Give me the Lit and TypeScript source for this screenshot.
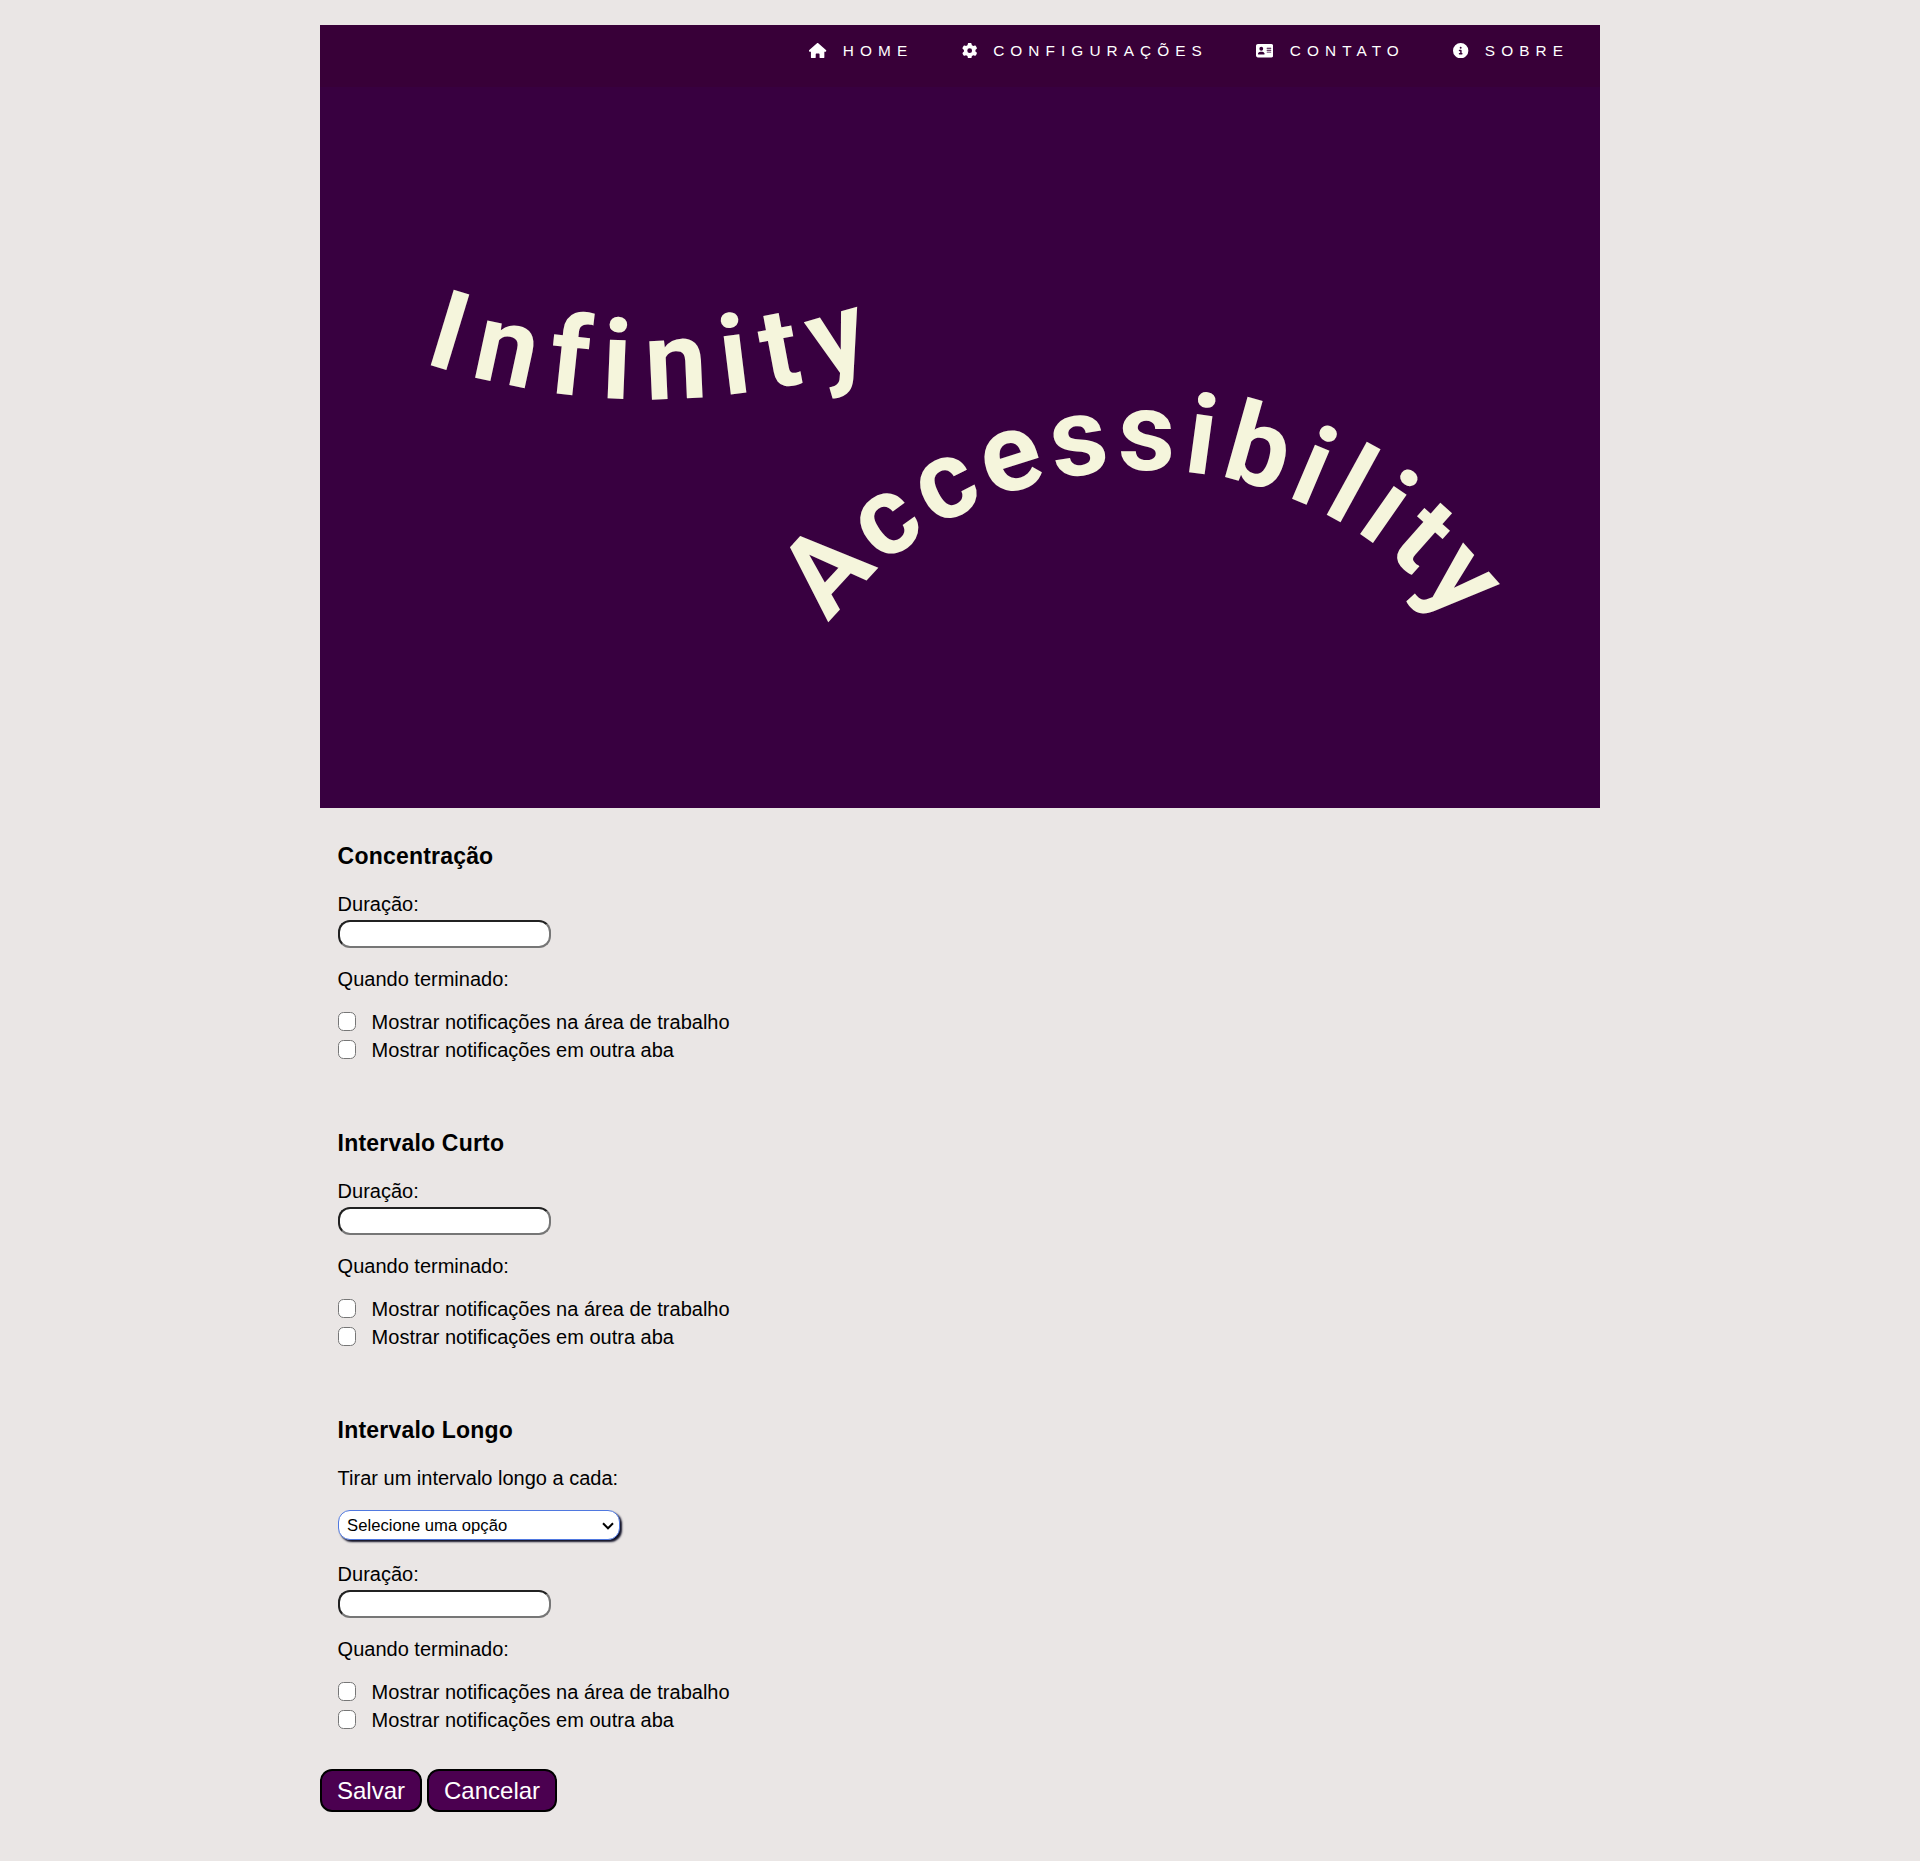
import { LitElement, html, css, svg } from "lit";
import { customElement, property } from "lit/decorators.js";

type Glyph = [char: string, x: number, y: number, angle: number];

const INFINITY: Glyph[] = [
  ["I", 423, 362.9, 16.9],
  ["n", 469.5, 376.6, 12.1],
  ["f", 546.4, 392.6, 6],
  ["i", 600.7, 397.9, 2.3],
  ["n", 646.2, 400, -2.6],
  ["i", 724.1, 395.3, -7],
  ["t", 767.7, 389.5, -10.6],
  ["y", 820.1, 378.4, -16.2],
];

const ACCESSIBILITY: Glyph[] = [
  ["A", 828.1, 622.6, -47.4],
  ["c", 882.1, 564.9, -36],
  ["c", 934.7, 527.4, -27],
  ["e", 991.6, 498.2, -17.5],
  ["s", 1055.3, 479, -8.8],
  ["s", 1118, 470.1, 0],
  ["i", 1182.3, 471.3, 7.7],
  ["b", 1219.3, 475.3, 15.7],
  ["i", 1285.7, 496, 23],
  ["l", 1320.7, 511.4, 28.7],
  ["i", 1354.4, 530.1, 35],
  ["t", 1384.9, 551.6, 41.5],
  ["y", 1419.1, 581.2, 48.5],
];

const curvedWord = (glyphs: Glyph[]) => svg`<text
  x=${glyphs.map((g) => g[1]).join(" ")}
  y=${glyphs.map((g) => g[2]).join(" ")}
  rotate=${glyphs.map((g) => g[3]).join(" ")}
>${glyphs.map((g) => g[0]).join("")}</text>`;

const ICONS = {
  home: {
    width: 576,
    d: "M575.8 255.5c0 18-15 32.1-32 32.1h-32l.7 160.2c0 2.7-.2 5.4-.5 8.1V472c0 22.1-17.9 40-40 40H456c-1.1 0-2.200 0-3.300-.1c-1.400 .1-2.800 .1-4.200 .1H416 392c-22.100 0-40-17.900-40-40V448 384c0-17.700-14.300-32-32-32H256c-17.700 0-32 14.300-32 32v64 24c0 22.100-17.900 40-40 40H160 128.100c-1.500 0-3-.1-4.500-.2c-1.200 .1-2.400 .2-3.600 .2H104c-22.100 0-40-17.900-40-40V360c0-.9 0-1.900 .1-2.800V287.600H32c-18 0-32-14-32-32.100c0-9 3-17 10-24L266.400 8c7-7 15-8 22-8s15 2 21 7L564.800 231.500c8 7 12 15 11 24z",
  },
  gear: {
    width: 512,
    d: "M495.900 166.600c3.200 8.700 .5 18.400-6.400 24.600l-43.300 39.400c1.100 8.300 1.700 16.800 1.700 25.400s-.6 17.100-1.700 25.400l43.300 39.400c6.900 6.200 9.600 15.900 6.400 24.600c-4.400 11.900-9.700 23.300-15.800 34.300l-4.700 8.100c-6.600 11-14 21.400-22.100 31.200c-5.900 7.200-15.700 9.600-24.500 6.800l-55.700-17.700c-13.400 10.300-28.200 18.900-44 25.400l-12.500 57.100c-2 9.100-9 16.300-18.200 17.800c-13.800 2.300-28 3.500-42.500 3.500s-28.700-1.200-42.500-3.500c-9.200-1.500-16.200-8.700-18.200-17.800l-12.500-57.100c-15.800-6.500-30.600-15.100-44-25.400L83.100 425.900c-8.800 2.800-18.600 .3-24.500-6.800c-8.100-9.800-15.500-20.200-22.100-31.200l-4.700-8.100c-6.100-11-11.400-22.400-15.800-34.300c-3.200-8.700-.5-18.400 6.400-24.600l43.300-39.400C64.600 273.100 64 264.600 64 256s.6-17.100 1.700-25.400L22.400 191.200c-6.900-6.200-9.600-15.900-6.400-24.600c4.400-11.900 9.700-23.300 15.800-34.300l4.700-8.100c6.600-11 14-21.400 22.100-31.200c5.900-7.200 15.700-9.600 24.500-6.800l55.700 17.700c13.400-10.300 28.200-18.900 44-25.400l12.500-57.100c2-9.100 9-16.300 18.200-17.800C227.300 1.200 241.500 0 256 0s28.700 1.200 42.500 3.500c9.200 1.500 16.200 8.700 18.200 17.800l12.500 57.100c15.800 6.500 30.600 15.100 44 25.400l55.700-17.700c8.800-2.800 18.600-.3 24.500 6.800c8.100 9.800 15.500 20.200 22.100 31.200l4.700 8.100c6.100 11 11.400 22.400 15.800 34.300zM256 336a80 80 0 1 0 0-160 80 80 0 1 0 0 160z",
  },
  card: {
    width: 576,
    d: "M64 32C28.700 32 0 60.700 0 96V416c0 35.300 28.700 64 64 64H512c35.300 0 64-28.700 64-64V96c0-35.300-28.700-64-64-64H64zm80 256h64c44.200 0 80 35.800 80 80c0 8.800-7.200 16-16 16H80c-8.800 0-16-7.200-16-16c0-44.200 35.800-80 80-80zm-32-96a64 64 0 1 1 128 0 64 64 0 1 1-128 0zm256-32H496c8.800 0 16 7.200 16 16s-7.200 16-16 16H368c-8.800 0-16-7.200-16-16s7.200-16 16-16zm0 64H496c8.800 0 16 7.200 16 16s-7.200 16-16 16H368c-8.800 0-16-7.200-16-16s7.200-16 16-16zm0 64H496c8.800 0 16 7.200 16 16s-7.200 16-16 16H368c-8.800 0-16-7.200-16-16s7.200-16 16-16z",
  },
  info: {
    width: 512,
    d: "M256 512A256 256 0 1 0 256 0a256 256 0 1 0 0 512zM216 336h24V272H216c-13.300 0-24-10.700-24-24s10.700-24 24-24h48c13.300 0 24 10.700 24 24v88h8c13.300 0 24 10.700 24 24s-10.700 24-24 24H216c-13.300 0-24-10.700-24-24s10.700-24 24-24zm40-208a32 32 0 1 1 0 64 32 32 0 1 1 0-64z",
  },
};

const LINKS: { icon: keyof typeof ICONS; label: string }[] = [
  { icon: "home", label: "HOME" },
  { icon: "gear", label: "CONFIGURAÇÕES" },
  { icon: "card", label: "CONTATO" },
  { icon: "info", label: "SOBRE" },
];

@customElement("site-hero")
export class SiteHero extends LitElement {
  static styles = css`
    :host {
      display: flex;
      flex-direction: column;
      height: 783px;
      background: #380040;
    }
    .nav {
      display: flex;
      justify-content: flex-end;
      gap: 48.3px;
      box-sizing: border-box;
      height: 62px;
      padding: 17px 31px 0 0;
      background: #380038;
    }
    .link {
      display: flex;
      align-items: flex-start;
      gap: 16.3px;
      height: 18px;
      font: 15.36px/18px "Liberation Sans", Arial, sans-serif;
      letter-spacing: 6.08px;
      color: #fff;
      text-decoration: none;
    }
    .icon {
      display: block;
      height: 15.36px;
      fill: #fff;
      margin-top: 0.6px;
    }
    .banner {
      display: block;
      width: 1280px;
      height: 721px;
    }
    .title {
      font: 700 111px Roboto, sans-serif;
      fill: #f5f5dc;
    }
  `;

  render() {
    return html`
      <nav class="nav">
        ${LINKS.map(({ icon, label }) => {
          const { width, d } = ICONS[icon];
          return html`<a class="link">
            <svg class="icon" viewBox="0 0 ${width} 512"><path d=${d} /></svg>
            <span>${label}</span>
          </a>`;
        })}
      </nav>
      <svg class="banner" viewBox="320 87 1280 721">
        <g class="title">${curvedWord(INFINITY)}${curvedWord(ACCESSIBILITY)}</g>
      </svg>
    `;
  }
}

@customElement("timer-section")
export class TimerSection extends LitElement {
  @property() heading = "";
  @property({ type: Boolean }) selectable = false;

  static styles = css`
    :host {
      display: block;
      padding: 35px 18px 31px 17.6px;
      font: 20px/24px "Liberation Sans", Arial, sans-serif;
      color: #000;
    }
    .heading {
      margin: 0 0 23px;
      font-size: 23px;
      line-height: 26px;
      letter-spacing: 0.2px;
    }
    .text {
      margin: 0;
    }
    .select {
      display: flex;
      align-items: center;
      justify-content: space-between;
      box-sizing: border-box;
      width: 282px;
      height: 30px;
      margin: 20px 0 22px;
      padding: 1px 5px 0 8.500px;
      border: 1px solid #4f78e0;
      border-radius: 12px;
      background: #fff;
      box-shadow: 2px 2px 2px #101025;
      font-size: 16.65px;
    }
    .chevron {
      width: 12px;
      height: 8px;
      fill: none;
      stroke: #000;
      stroke-width: 2;
    }
    .field {
      display: block;
      box-sizing: border-box;
      width: 213px;
      height: 28px;
      margin: 4px 0 19px;
      padding: 0;
      border: 2px inset #767676;
      border-radius: 12px;
      background: #fff;
    }
    .options {
      display: flex;
      flex-direction: column;
      margin-top: 17px;
    }
    .option {
      display: flex;
      align-items: center;
      gap: 16px;
      height: 28px;
    }
    .check {
      appearance: none;
      box-sizing: border-box;
      width: 18px;
      height: 19px;
      margin: 0 0 1px;
      border: 1px solid #767676;
      border-radius: 5.500px;
      background: #fff;
    }
  `;

  render() {
    return html`
      <h3 class="heading">${this.heading}</h3>
      ${this.selectable
        ? html`<p class="text">Tirar um intervalo longo a cada:</p>
            <div class="select" role="combobox">
              <span>Selecione uma opção</span>
              <svg class="chevron" viewBox="0 0 12 8"><path d="M1 1.300l5 5 5-5" /></svg>
            </div>`
        : ""}
      <p class="text">Duração:</p>
      <input class="field" />
      <p class="text">Quando terminado:</p>
      <div class="options">
        <label class="option"><input class="check" type="checkbox" />Mostrar notificações na área de trabalho</label>
        <label class="option"><input class="check" type="checkbox" />Mostrar notificações em outra aba</label>
      </div>
    `;
  }
}

@customElement("app-root")
export class AppRoot extends LitElement {
  static styles = css`
    :host {
      display: block;
      box-sizing: border-box;
      height: 1861px;
      padding-top: 25px;
      background: #eae6e5;
    }
    .page {
      width: 1280px;
      margin: 0 auto;
    }
    .actions {
      display: flex;
      gap: 5px;
      margin-top: 4px;
    }
    .button {
      box-sizing: border-box;
      height: 43px;
      padding: 0 15px;
      border: 2px solid #000;
      border-radius: 12px;
      background: #4b0050;
      color: #fff;
      font: 24px/27px "Liberation Sans", Arial, sans-serif;
    }
  `;

  render() {
    return html`
      <main class="page">
        <site-hero></site-hero>
        <timer-section heading="Concentração"></timer-section>
        <timer-section heading="Intervalo Curto"></timer-section>
        <timer-section heading="Intervalo Longo" selectable></timer-section>
        <div class="actions">
          <button class="button">Salvar</button>
          <button class="button">Cancelar</button>
        </div>
      </main>
    `;
  }
}
